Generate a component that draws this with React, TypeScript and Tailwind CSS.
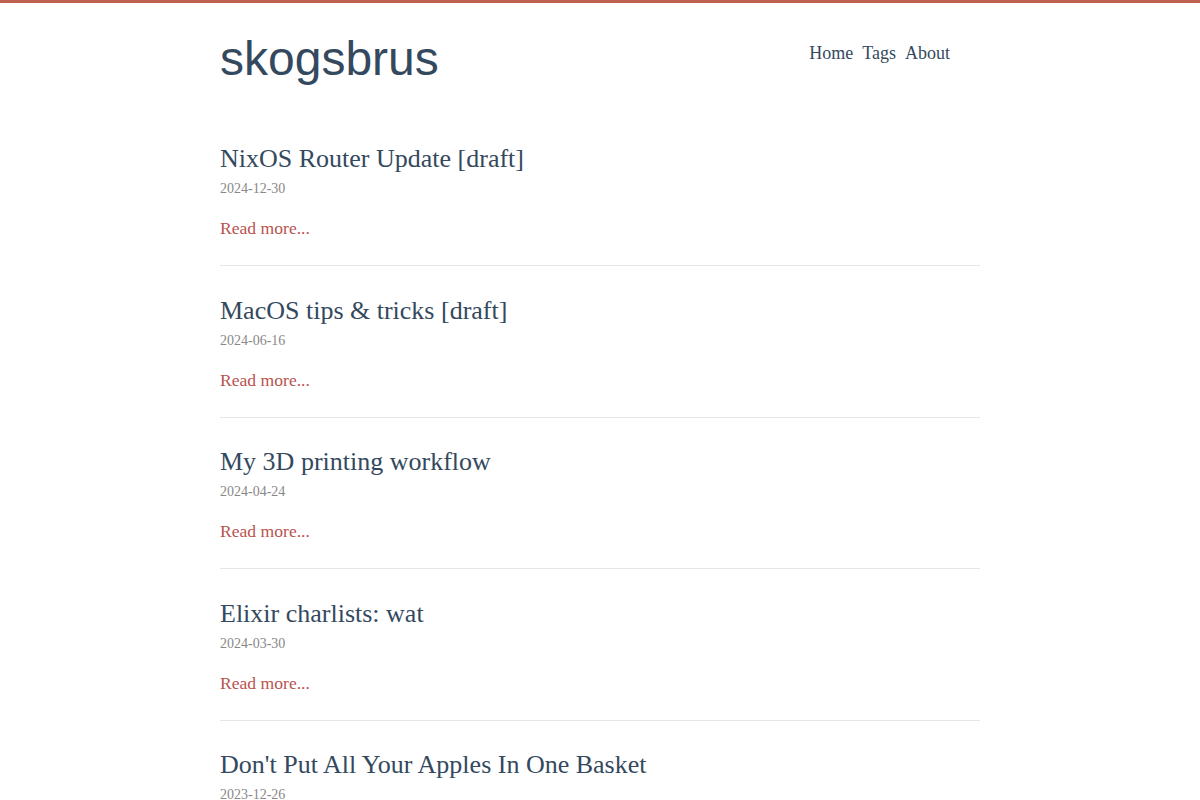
import React from "react";

const posts = [
  { title: "NixOS Router Update [draft]", date: "2024-12-30" },
  { title: "MacOS tips & tricks [draft]", date: "2024-06-16" },
  { title: "My 3D printing workflow", date: "2024-04-24" },
  { title: "Elixir charlists: wat", date: "2024-03-30" },
  { title: "Don't Put All Your Apples In One Basket", date: "2023-12-26" },
];

export default function App() {
  return (
    <div className="min-h-screen bg-white border-t-[3px] border-[#c0604e] text-[#34495e] font-['Liberation_Serif',serif]">
      <div className="w-[800px] mx-auto">
        <header className="flex justify-between items-start px-[20px] pt-[28px] pb-[27.5px]">
          <h1 className="text-[48px] leading-[56px] font-['Liberation_Sans',Arial,sans-serif] font-normal">
            skogsbrus
          </h1>
          <nav className="flex gap-[9px] mt-[8.5px] mr-[30px] text-[18px] leading-[27px]">
            <a href="#">Home</a>
            <a href="#">Tags</a>
            <a href="#">About</a>
          </nav>
        </header>
        <main className="px-[20px]">
          {posts.map((p) => (
            <article key={p.title} className="pt-[28.5px] pb-[23px] border-b border-[#e6e6e6]">
              <h2 className="text-[26px] leading-[31px] font-normal">{p.title}</h2>
              <div className="mt-[5px] text-[14px] leading-[20px] text-[#888888]">{p.date}</div>
              <a href="#" className="block mt-[16px] text-[17.6px] leading-[27px] text-[#b9534e]">
                Read more...
              </a>
            </article>
          ))}
        </main>
      </div>
    </div>
  );
}
